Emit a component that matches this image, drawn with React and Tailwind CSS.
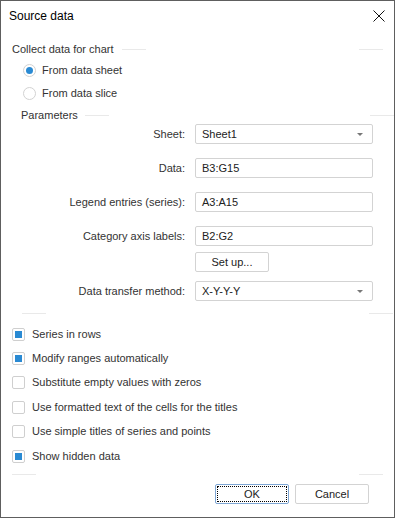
import React from 'react'

function Rule({ left, right }) {
  return (
    <div className="flex flex-1 items-center justify-between">
      <div className={`h-px bg-[#e9e9e9] ${left}`} />
      <div className={`h-px bg-[#e9e9e9] ${right}`} />
    </div>
  )
}

function Radio({ checked, label }) {
  return (
    <div className="flex h-[20px] items-center pl-[22px]">
      <span className="flex h-[13px] w-[13px] items-center justify-center rounded-full border border-[#d2d2d2] bg-white">
        {checked && <span className="h-[7px] w-[7px] rounded-full bg-[#2a8ad3]" />}
      </span>
      <span className="ml-[6px] text-[#333]">{label}</span>
    </div>
  )
}

function Check({ checked, label }) {
  return (
    <div className="flex h-[24.4px] items-center pl-[11px]">
      <span className="flex h-[13px] w-[13px] items-center justify-center rounded-[2px] border border-[#cfcfcf] bg-white">
        {checked && <span className="h-[7px] w-[7px] bg-[#2a8ad3]" />}
      </span>
      <span className="ml-[7px] text-[#333]">{label}</span>
    </div>
  )
}

function Caret() {
  return (
    <svg width="6" height="3" viewBox="0 0 6 3" className="mr-[9px]">
      <path d="M0 0 L6 0 L3 3 Z" fill="#777" />
    </svg>
  )
}

function Field({ label, value, combo, className = '' }) {
  return (
    <div className={`flex h-[20px] items-center ${className}`}>
      <div className="w-[184px] text-right text-[#333]">{label}</div>
      <div className="ml-[10px] flex h-[20px] w-[178px] items-center justify-between rounded-[2px] border border-[#d3d3d3] bg-white pl-[6px]">
        <span className="text-[#222]">{value}</span>
        {combo && <Caret />}
      </div>
    </div>
  )
}

export default function App() {
  return (
    <div className="flex h-[518px] w-[395px] flex-col border border-[#5e5e5e] bg-white text-[11px] leading-none font-['Liberation_Sans',Arial,sans-serif]">
      <div className="flex h-[30px] items-center justify-between pl-[8px] pr-[9px]">
        <span className="text-[12px] text-black">Source data</span>
        <svg width="12" height="12" viewBox="0 0 12 12">
          <path d="M0.5 0.5 L11.5 11.5 M11.5 0.5 L0.5 11.5" stroke="#111" strokeWidth="1" />
        </svg>
      </div>

      <div className="mt-[8px] flex h-[20px] items-center pl-[11px] pr-[11px]">
        <span className="text-[#333]">Collect data for chart</span>
        <div className="ml-[8px] flex flex-1">
          <Rule left="w-[24px]" right="w-[24px]" />
        </div>
      </div>
      <div className="mt-px">
        <Radio checked label="From data sheet" />
      </div>
      <div className="mt-[3px]">
        <Radio label="From data slice" />
      </div>

      <div className="mt-[4px] flex h-[16px] items-center pl-[20px]">
        <span className="text-[#333]">Parameters</span>
        <div className="ml-[7px] flex flex-1">
          <Rule left="w-[24px]" right="w-[24px]" />
        </div>
      </div>

      <Field label="Sheet:" value="Sheet1" combo className="mt-px" />
      <Field label="Data:" value="B3:G15" className="mt-[14px]" />
      <Field label="Legend entries (series):" value="A3:A15" className="mt-[14px]" />
      <Field label="Category axis labels:" value="B2:G2" className="mt-[14px]" />
      <div className="mt-[6px] flex pl-[194px]">
        <button className="h-[20px] w-[74px] rounded-[2px] border border-[#d3d3d3] bg-white text-[#222]">Set up...</button>
      </div>
      <Field label="Data transfer method:" value="X-Y-Y-Y" combo className="mt-[9px]" />

      <div className="mt-[12px] flex h-px pl-[21px] pr-[1px]">
        <Rule left="w-[24px]" right="w-[24px]" />
      </div>

      <div className="mt-[8px] flex flex-col">
        <Check checked label="Series in rows" />
        <Check checked label="Modify ranges automatically" />
        <Check label="Substitute empty values with zeros" />
        <Check label="Use formatted text of the cells for the titles" />
        <Check label="Use simple titles of series and points" />
        <Check checked label="Show hidden data" />
      </div>

      <div className="mt-[6px] flex h-px pl-[11px] pr-[11px]">
        <Rule left="w-[24px]" right="w-[24px]" />
      </div>

      <div className="mt-[9px] flex justify-end gap-[6px] pr-[25px]">
        <button className="flex h-[20px] w-[74px] items-center justify-center rounded-[2px] border border-[#7ea6d4] bg-white p-px">
          <span className="flex h-full w-full items-center justify-center border border-dotted border-black text-[#222]">OK</span>
        </button>
        <button className="h-[20px] w-[74px] rounded-[2px] border border-[#d3d3d3] bg-white text-[#222]">Cancel</button>
      </div>
    </div>
  )
}
